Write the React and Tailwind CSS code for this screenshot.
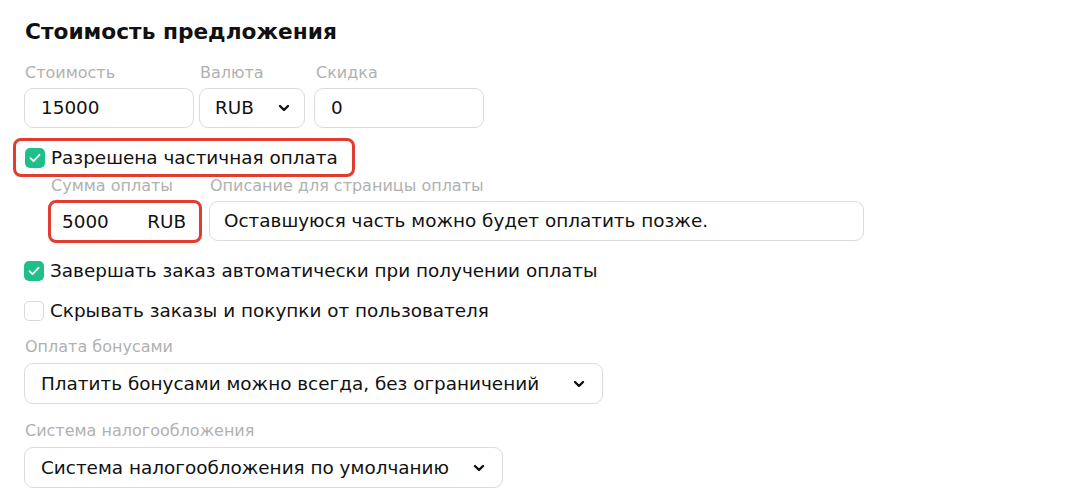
import React from 'react';

const Chevron = () => (
    <svg width="12" height="8" viewBox="0 0 12 8" className="shrink-0">
        <path d="M2 2l4 4 4-4" fill="none" stroke="#111" strokeWidth="2.4" strokeLinecap="round" strokeLinejoin="round" />
    </svg>
);

const Checkbox = ({ checked }) =>
    checked ? (
        <span className="w-[20px] h-[20px] rounded-[5px] bg-[#1fbf8a] flex items-center justify-center shrink-0">
            <svg width="12" height="10" viewBox="0 0 12 10">
                <path d="M1.5 5.2l3 3 6-6.4" fill="none" stroke="#fff" strokeWidth="1.8" strokeLinecap="round" strokeLinejoin="round" />
            </svg>
        </span>
    ) : (
        <span className="w-[20px] h-[20px] rounded-[5px] border border-[#d9d9d9] bg-white shrink-0" />
    );

const Label = ({ children, className = '' }) => (
    <div className={`text-[16px] leading-[20px] text-[#b1b1b1] ${className}`}>{children}</div>
);

const Field = ({ className = '', children }) => (
    <div className={`h-[40px] rounded-[9px] border border-[#dcdcdc] bg-white flex items-center ${className}`}>
        {children}
    </div>
);

const CheckRow = ({ checked, text }) => (
    <label className="flex items-center gap-[6px] h-[20px]">
        <Checkbox checked={checked} />
        <span className="text-[18.4px] leading-[20px] text-[#111]">{text}</span>
    </label>
);

export default function App() {
    return (
        <div className="min-h-screen bg-white pl-[24px] pt-[18px] font-['DejaVu_Sans',sans-serif] text-[#111]">
            <h2 className="text-[21.7px] leading-[28px] font-bold pl-[1px]">Стоимость предложения</h2>

            {/* Price row */}
            <div className="flex items-start mt-[17px]">
                <div className="w-[170px]">
                    <Label className="pl-[1px]">Стоимость</Label>
                    <Field className="mt-[5px] px-[16px] text-[18.4px]">15000</Field>
                </div>
                <div className="w-[106px] ml-[5px]">
                    <Label className="pl-[1px]">Валюта</Label>
                    <Field className="mt-[5px] pl-[15px] pr-[14px] justify-between text-[18.4px]">
                        <span>RUB</span>
                        <Chevron />
                    </Field>
                </div>
                <div className="w-[170px] ml-[9px]">
                    <Label className="pl-[2px]">Скидка</Label>
                    <Field className="mt-[5px] px-[16px] text-[18.4px]">0</Field>
                </div>
            </div>

            {/* Partial payment */}
            <div className="mt-[10px] -ml-[11px] w-[342px] h-[39px] border-[3px] border-[#e23c31] rounded-[8px] flex items-center pl-[9px]">
                <CheckRow checked text="Разрешена частичная оплата" />
            </div>

            <div className="flex items-start ml-[24px] mt-[-1px]">
                <div>
                    <Label className="pl-[3px]">Сумма оплаты</Label>
                    <div className="mt-[4px] w-[154px] h-[43px] border-[3px] border-[#e23c31] rounded-[8px] flex items-center justify-between pl-[11px] pr-[13px] text-[18.4px]">
                        <span>5000</span>
                        <span>RUB</span>
                    </div>
                </div>
                <div className="ml-[7px]">
                    <Label className="pl-[1px]">Описание для страницы оплаты</Label>
                    <Field className="mt-[5px] w-[655px] px-[14px] text-[18.4px]">
                        Оставшуюся часть можно будет оплатить позже.
                    </Field>
                </div>
            </div>

            <div className="mt-[18px] flex flex-col gap-[20px]">
                <CheckRow checked text="Завершать заказ автоматически при получении оплаты" />
                <CheckRow text="Скрывать заказы и покупки от пользователя" />
            </div>

            <Label className="mt-[16px] pl-[1px]">Оплата бонусами</Label>
            <Field className="mt-[6px] w-[579px] h-[41px] pl-[16px] pr-[17px] justify-between text-[18.4px]">
                <span>Платить бонусами можно всегда, без ограничений</span>
                <Chevron />
            </Field>

            <Label className="mt-[17px] pl-[1px]">Система налогообложения</Label>
            <Field className="mt-[6px] w-[479px] h-[41px] pl-[16px] pr-[17px] justify-between text-[18.4px]">
                <span>Система налогообложения по умолчанию</span>
                <Chevron />
            </Field>
        </div>
    );
}
